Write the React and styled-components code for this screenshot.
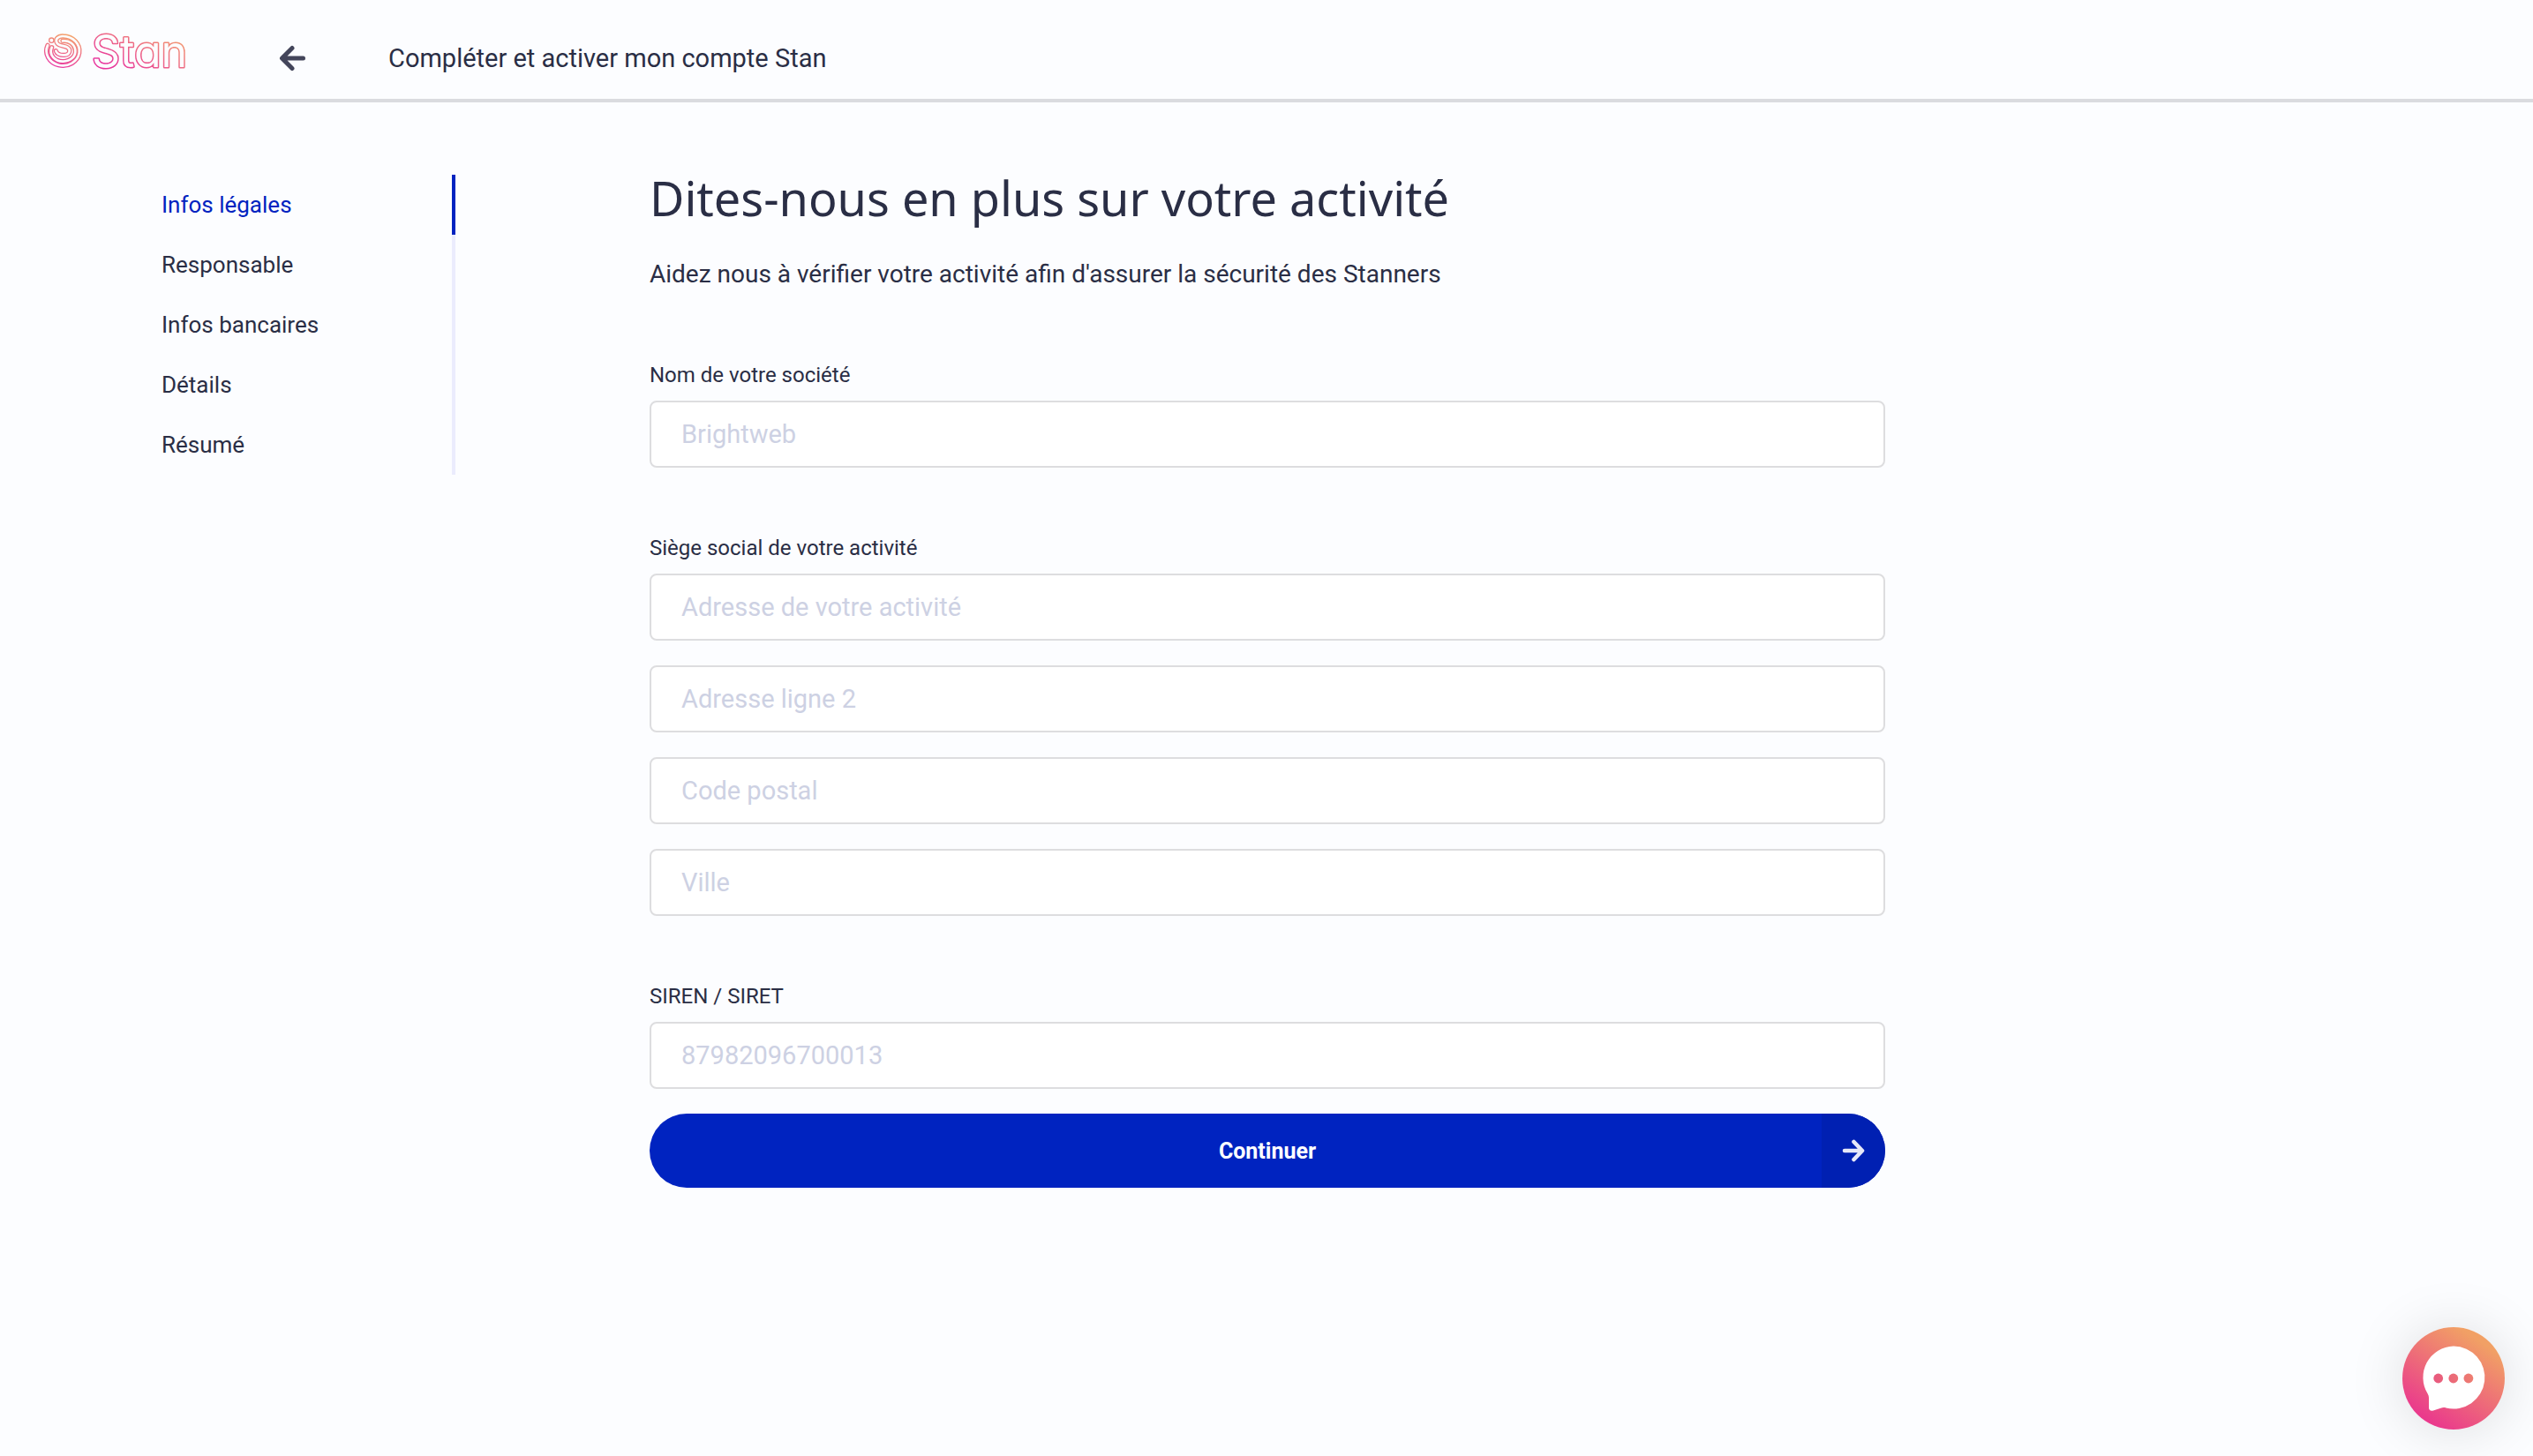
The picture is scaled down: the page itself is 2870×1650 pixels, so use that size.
import React from "react";
import styled, { createGlobalStyle } from "styled-components";

const colors = {
  page: "#fcfdff",
  ink: "#2a2e45",
  primary: "#0023c0",
  primaryDark: "#0020b2",
  line: "#dadbdf",
  field: "#dddddf",
  placeholder: "#cdd1e3",
  track: "#ebecfd",
};

const GlobalStyle = createGlobalStyle`
  *, *::before, *::after { box-sizing: border-box; }
  body {
    margin: 0;
    background: ${colors.page};
    color: ${colors.ink};
    font-family: Roboto, "Liberation Sans", sans-serif;
  }
`;

const Header = styled.header`
  display: flex;
  align-items: center;
  height: 116px;
  padding: 20px 50px 0;
  border-bottom: 4px solid ${colors.line};
`;

const LogoLink = styled.a`
  display: flex;
  align-self: flex-start;
  align-items: center;
  flex: none;
  width: 266px;
  height: 76px;
`;

const LogoDrawing = styled.svg`
  overflow: visible;
`;

const Wordmark = styled.text`
  font-family: Inter, sans-serif;
  font-size: 50px;
  font-weight: 400;
  font-feature-settings: "cv11";
  fill: ${colors.page};
  stroke: url(#word);
  stroke-width: 3px;
  stroke-linejoin: round;
  paint-order: stroke;
`;

const BackButton = styled.button`
  display: flex;
  flex: none;
  margin: 0 94px 0 0;
  padding: 0;
  border: 0;
  background: none;
  cursor: pointer;
`;

const HeaderTitle = styled.p`
  margin: 0;
  font-size: 29px;
  line-height: 40px;
`;

const Body = styled.div`
  display: flex;
  align-items: flex-start;
  gap: 220px;
  padding: 72px 50px 72px 0;
`;

const Steps = styled.nav`
  flex: none;
  width: 516px;
  padding: 10px 0 0 183px;
`;

const StepList = styled.ul`
  margin: 0;
  padding: 0;
  list-style: none;
`;

const Step = styled.li`
  border-right: 4px solid ${(p) => (p.$active ? colors.primary : colors.track)};
`;

const StepLink = styled.a`
  display: block;
  color: ${(p) => (p.$active ? colors.primary : colors.ink)};
  font-size: 26px;
  line-height: 68px;
  text-decoration: none;
`;

const Main = styled.main`
  flex: 1;
  min-width: 0;
  max-width: 1400px;
`;

const Title = styled.h1`
  margin: 0 0 32px;
  font-family: "Noto Sans", sans-serif;
  font-size: 54px;
  font-weight: 400;
  line-height: 72px;
`;

const Intro = styled.p`
  margin: 0 0 78px;
  font-size: 28px;
  line-height: 38px;
`;

const Form = styled.form`
  display: flex;
  flex-direction: column;
  gap: 74px;
`;

const Group = styled.div`
  display: flex;
  flex-direction: column;
  gap: 28px;
`;

const Field = styled.div`
  display: flex;
  flex-direction: column;
  gap: 12px;
`;

const Label = styled.label`
  font-size: 24px;
  line-height: 34px;
`;

const Input = styled.input`
  width: 100%;
  height: 76px;
  padding: 0 34px;
  border: 2px solid ${colors.field};
  border-radius: 8px;
  background: #fff;
  color: ${colors.ink};
  font-family: inherit;
  font-size: 29px;
  outline: 0;

  &::placeholder {
    color: ${colors.placeholder};
    opacity: 1;
  }

  &:focus {
    border-color: ${colors.primary};
  }
`;

const SubmitButton = styled.button`
  display: flex;
  align-items: center;
  width: 100%;
  height: 84px;
  padding: 0 0 0 72px;
  border: 0;
  border-radius: 42px;
  overflow: hidden;
  background: ${colors.primary};
  color: #fff;
  font-family: inherit;
  font-size: 25px;
  font-weight: 700;
  cursor: pointer;
`;

const SubmitText = styled.span`
  flex: 1;
`;

const SubmitIcon = styled.span`
  display: flex;
  align-items: center;
  justify-content: center;
  width: 72px;
  height: 100%;
  background: ${colors.primaryDark};
`;

const ChatButton = styled.button`
  position: fixed;
  right: 32px;
  bottom: 30px;
  width: 116px;
  height: 116px;
  padding: 0;
  border: 0;
  border-radius: 50%;
  background: linear-gradient(214deg, #f1a065 18%, #ea3a8c 84%);
  box-shadow: 0 2px 64px rgba(0, 0, 0, 0.13);
  cursor: pointer;
`;

const OUTER_RING =
  "M27 64 A56 50 0 1 0 80 33 C62 32 52 44 58 55 C64 67 84 65 94 71 C107 79 102 97 84 97 C70 98 58 93 55 83";
const INNER_RING =
  "M41 71 C30 97 52 119 79 119 C104 118 124 102 121 80 C118 58 98 47 78 49";

function Logo() {
  return (
    <LogoDrawing width="172" height="60" viewBox="0 0 172 60" aria-hidden="true">
      <defs>
        <linearGradient id="word" gradientUnits="userSpaceOnUse" x1="92" y1="55" x2="122" y2="-8">
          <stop offset="0" stopColor="#e8359d" />
          <stop offset="1" stopColor="#f4a76a" />
        </linearGradient>
        <linearGradient id="ring" gradientUnits="userSpaceOnUse" x1="60" y1="135" x2="92" y2="25">
          <stop offset="0" stopColor="#ea3aa0" />
          <stop offset="1" stopColor="#f4a56c" />
        </linearGradient>
      </defs>
      <g transform="translate(-5 2) scale(0.3333)" fill="none" strokeLinecap="round" strokeLinejoin="round">
        <g stroke="url(#ring)" strokeWidth="16">
          <path d={OUTER_RING} />
          <path d={INNER_RING} />
        </g>
        <g stroke={colors.page} strokeWidth="8">
          <path d={OUTER_RING} />
          <path d={INNER_RING} />
        </g>
        <circle cx="40" cy="47" r="8" stroke="url(#ring)" strokeWidth="4" />
      </g>
      <Wordmark x="54" y="48">
        Stan
      </Wordmark>
    </LogoDrawing>
  );
}

function BackArrow() {
  return (
    <svg width="30" height="30" viewBox="0 0 30 30" fill="none" stroke="#43455a" strokeWidth="5" strokeLinecap="round" strokeLinejoin="round" aria-hidden="true">
      <path d="M15 3.5 3.5 15 15 26.5M4 15h23.5" />
    </svg>
  );
}

function NextArrow() {
  return (
    <svg width="26" height="26" viewBox="0 0 26 26" fill="none" stroke="#e6e8f8" strokeWidth="4.6" strokeLinecap="round" strokeLinejoin="round" aria-hidden="true">
      <path d="M13.5 3 23 13l-9.500 10M22 13H3" />
    </svg>
  );
}

function ChatIcon() {
  return (
    <svg width="116" height="116" viewBox="0 0 116 116" aria-hidden="true">
      <defs>
        <linearGradient id="dots" gradientUnits="userSpaceOnUse" x1="34" y1="64" x2="82" y2="52">
          <stop offset="0" stopColor="#e8577f" />
          <stop offset="1" stopColor="#ee8070" />
        </linearGradient>
      </defs>
      <path
        fill="#fff"
        d="M58 21.500a35.500 35.500 0 1 1-8.500 70c-2-.6-4-.5-6 .2l-8.500 2.800c-3 .8-5-.4-5-3.500V80c0-1.500-.4-3-1.300-4.400A35.500 35.500 0 0 1 58 21.500Z"
      />
      <g fill="url(#dots)">
        <circle cx="40.700" cy="58" r="5.400" />
        <circle cx="57.800" cy="58" r="5.400" />
        <circle cx="74.900" cy="58" r="5.400" />
      </g>
    </svg>
  );
}

const steps = ["Infos légales", "Responsable", "Infos bancaires", "Détails", "Résumé"];

const addressLines = [
  { id: "address2", text: "Adresse ligne 2" },
  { id: "postcode", text: "Code postal" },
  { id: "city", text: "Ville" },
];

export default function App() {
  return (
    <>
      <GlobalStyle />
      <Header>
        <LogoLink href="#" aria-label="Stan">
          <Logo />
        </LogoLink>
        <BackButton type="button" aria-label="Retour">
          <BackArrow />
        </BackButton>
        <HeaderTitle>Compléter et activer mon compte Stan</HeaderTitle>
      </Header>
      <Body>
        <Steps>
          <StepList>
            {steps.map((step, i) => (
              <Step key={step} $active={i === 0}>
                <StepLink href="#" $active={i === 0} aria-current={i === 0 ? "step" : undefined}>
                  {step}
                </StepLink>
              </Step>
            ))}
          </StepList>
        </Steps>
        <Main>
          <Title>Dites-nous en plus sur votre activité</Title>
          <Intro>Aidez nous à vérifier votre activité afin d'assurer la sécurité des Stanners</Intro>
          <Form onSubmit={(e) => e.preventDefault()}>
            <Field>
              <Label htmlFor="company">Nom de votre société</Label>
              <Input id="company" type="text" placeholder="Brightweb" />
            </Field>
            <Group>
              <Field>
                <Label htmlFor="address">Siège social de votre activité</Label>
                <Input id="address" type="text" placeholder="Adresse de votre activité" />
              </Field>
              {addressLines.map((line) => (
                <Input key={line.id} id={line.id} type="text" placeholder={line.text} aria-label={line.text} />
              ))}
            </Group>
            <Group>
              <Field>
                <Label htmlFor="siren">SIREN / SIRET</Label>
                <Input id="siren" type="text" placeholder="87982096700013" />
              </Field>
              <SubmitButton type="submit">
                <SubmitText>Continuer</SubmitText>
                <SubmitIcon>
                  <NextArrow />
                </SubmitIcon>
              </SubmitButton>
            </Group>
          </Form>
        </Main>
      </Body>
      <ChatButton type="button" aria-label="Ouvrir la messagerie">
        <ChatIcon />
      </ChatButton>
    </>
  );
}
